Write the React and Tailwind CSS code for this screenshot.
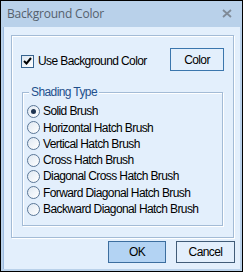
const options = [
  "Solid Brush",
  "Horizontal Hatch Brush",
  "Vertical Hatch Brush",
  "Cross Hatch Brush",
  "Diagonal Cross Hatch Brush",
  "Forward Diagonal Hatch Brush",
  "Backward Diagonal Hatch Brush",
];

const Radio = ({ checked }) => (
  <span className="w-[13px] h-[13px] rounded-full border border-[#5b7797] bg-gradient-to-br from-[#dfe8f2] to-white flex items-center justify-center shrink-0">
    {checked && <span className="w-[5px] h-[5px] rounded-full bg-[#1f3552]" />}
  </span>
);

const App = () => {
  return (
    <div
      className="w-[243px] h-[272px] border border-black bg-[#b9d1ea] flex flex-col text-[12px] text-black tracking-[-0.6px]"
      style={{ fontFamily: '"Liberation Sans", Arial, sans-serif' }}
    >
      <div className="h-[26px] flex items-center pl-[6px] pr-[10px] shrink-0">
        <span
          className="text-[12px] text-[#55606c] tracking-[-0.2px] flex-1"
          style={{ fontFamily: '"Open Sans", "Noto Sans", sans-serif' }}
        >
          Background Color
        </span>
        <svg width="10" height="9" viewBox="0 0 10 9" className="mt-[-1px]">
          <path d="M1 1 L9 8 M9 1 L1 8" stroke="#7f8a97" strokeWidth="1.8" />
        </svg>
      </div>
      <div className="flex-1 mx-[2px] mb-[2px] border-l border-[#9dbbe0] bg-[#e3effc] flex flex-col">
        <div className="ml-[7px] mt-[8px] w-[223px] h-[203px] border border-[#a3bbd6] shadow-[1px_1px_0_#fff,inset_1px_1px_0_#fff] flex flex-col">
          <div className="flex items-start pl-[9px] pt-[12px] pr-[9px]">
            <div className="flex items-center mt-[4px]">
              <span className="w-[13px] h-[13px] border border-[#36638f] bg-gradient-to-br from-[#dbe6f1] to-white flex items-center justify-center">
                <svg width="9" height="8" viewBox="0 0 9 8">
                  <path d="M1 4 L3.5 6.5 L8 1" stroke="#000" strokeWidth="2" fill="none" />
                </svg>
              </span>
              <span className="ml-[4px]">Use Background Color</span>
            </div>
            <button className="ml-auto w-[54px] h-[23px] border border-[#3b76ad] bg-[#e3effc] flex items-center justify-center text-[12px]">
              Color
            </button>
          </div>
          <div className="relative ml-[10px] mt-[21px] w-[201px] h-[134px] border border-[#a3bbd6] shadow-[1px_1px_0_#fff,inset_1px_1px_0_#fff] pt-[10px] pl-[4px]">
            <span className="absolute left-[6px] top-[-9px] px-[2px] bg-[#e3effc] text-[#1f4f8c] leading-[16px]">
              Shading Type
            </span>
            {options.map((o, i) => (
              <div key={o} className="h-[16.33px] flex items-center">
                <Radio checked={i === 0} />
                <span className="ml-[3px]">{o}</span>
              </div>
            ))}
          </div>
        </div>
        <div className="flex justify-end gap-[10px] mt-[3px] mr-[5px]">
          <button className="w-[58px] h-[22px] border border-[#3c6e9f] bg-[#b3d3f3] text-[12px]">OK</button>
          <button className="w-[59px] h-[22px] border border-[#415c78] bg-[#e3effc] text-[12px]">Cancel</button>
        </div>
      </div>
    </div>
  );
};

export default App;
